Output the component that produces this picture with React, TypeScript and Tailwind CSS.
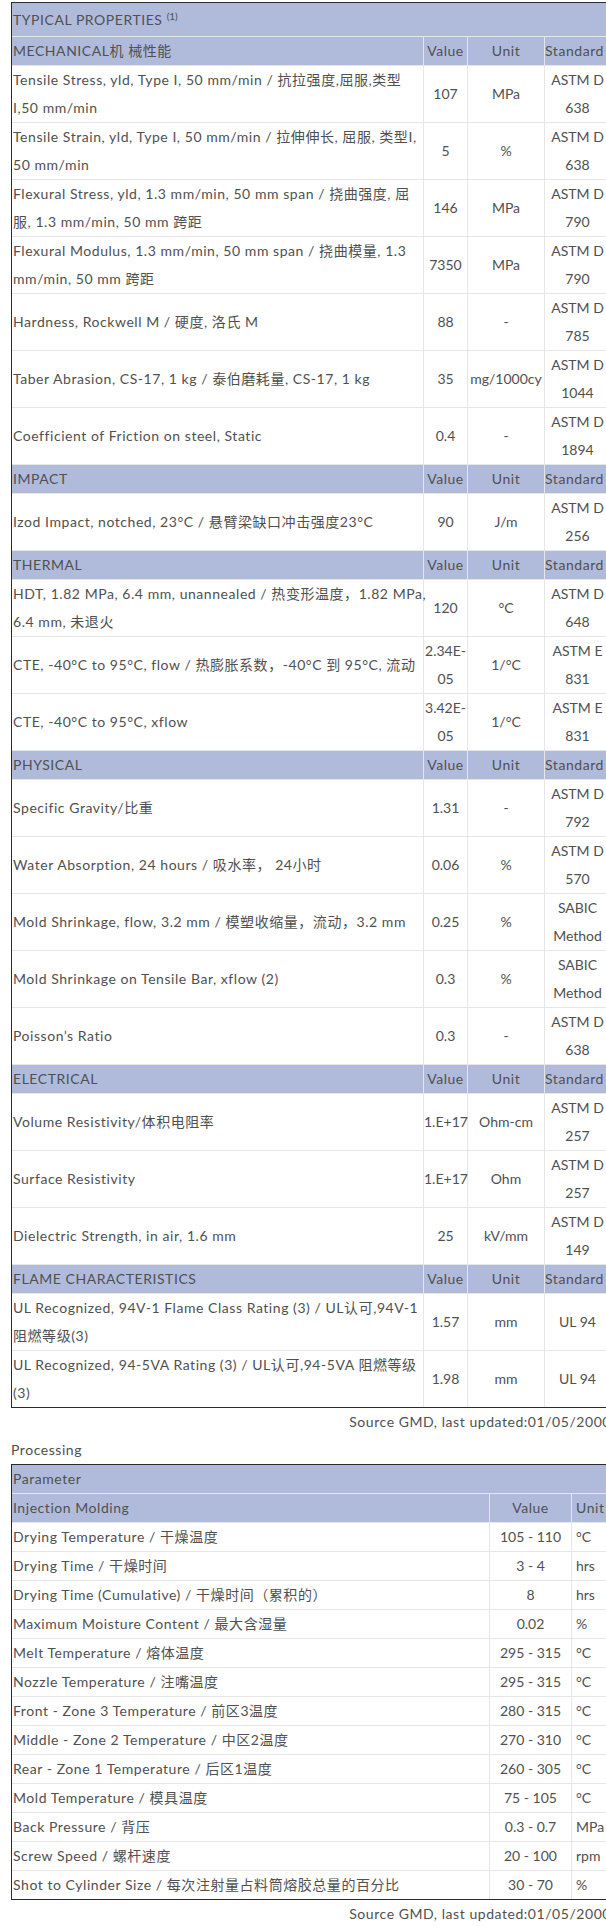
import React from 'react';

type Row = { name: string[]; value: string; unit: string; std: string };
type Section = { title: string; rows: Row[] };

const sections: Section[] = [
  {
    title: 'MECHANICAL机 械性能',
    rows: [
      { name: ['Tensile Stress, yld, Type I, 50 mm/min / 抗拉强度,屈服,类型', 'I,50 mm/min'], value: '107', unit: 'MPa', std: 'ASTM D 638' },
      { name: ['Tensile Strain, yld, Type I, 50 mm/min / 拉伸伸长, 屈服, 类型I,', '50 mm/min'], value: '5', unit: '%', std: 'ASTM D 638' },
      { name: ['Flexural Stress, yld, 1.3 mm/min, 50 mm span / 挠曲强度, 屈', '服, 1.3 mm/min, 50 mm 跨距'], value: '146', unit: 'MPa', std: 'ASTM D 790' },
      { name: ['Flexural Modulus, 1.3 mm/min, 50 mm span / 挠曲模量, 1.3', 'mm/min, 50 mm 跨距'], value: '7350', unit: 'MPa', std: 'ASTM D 790' },
      { name: ['Hardness, Rockwell M / 硬度, 洛氏 M'], value: '88', unit: '-', std: 'ASTM D 785' },
      { name: ['Taber Abrasion, CS-17, 1 kg / 泰伯磨耗量, CS-17, 1 kg'], value: '35', unit: 'mg/1000cy', std: 'ASTM D 1044' },
      { name: ['Coefficient of Friction on steel, Static'], value: '0.4', unit: '-', std: 'ASTM D 1894' },
    ],
  },
  {
    title: 'IMPACT',
    rows: [
      { name: ['Izod Impact, notched, 23°C / 悬臂梁缺口冲击强度23°C'], value: '90', unit: 'J/m', std: 'ASTM D 256' },
    ],
  },
  {
    title: 'THERMAL',
    rows: [
      { name: ['HDT, 1.82 MPa, 6.4 mm, unannealed / 热变形温度，1.82 MPa,', '6.4 mm, 未退火'], value: '120', unit: '°C', std: 'ASTM D 648' },
      { name: ['CTE, -40°C to 95°C, flow / 热膨胀系数，-40°C 到 95°C, 流动'], value: '2.34E-05', unit: '1/°C', std: 'ASTM E 831' },
      { name: ['CTE, -40°C to 95°C, xflow'], value: '3.42E-05', unit: '1/°C', std: 'ASTM E 831' },
    ],
  },
  {
    title: 'PHYSICAL',
    rows: [
      { name: ['Specific Gravity/比重'], value: '1.31', unit: '-', std: 'ASTM D 792' },
      { name: ['Water Absorption, 24 hours / 吸水率， 24小时'], value: '0.06', unit: '%', std: 'ASTM D 570' },
      { name: ['Mold Shrinkage, flow, 3.2 mm / 模塑收缩量，流动，3.2 mm'], value: '0.25', unit: '%', std: 'SABIC Method' },
      { name: ['Mold Shrinkage on Tensile Bar, xflow (2)'], value: '0.3', unit: '%', std: 'SABIC Method' },
      { name: ['Poisson’s Ratio'], value: '0.3', unit: '-', std: 'ASTM D 638' },
    ],
  },
  {
    title: 'ELECTRICAL',
    rows: [
      { name: ['Volume Resistivity/体积电阻率'], value: '1.E+17', unit: 'Ohm-cm', std: 'ASTM D 257' },
      { name: ['Surface Resistivity'], value: '1.E+17', unit: 'Ohm', std: 'ASTM D 257' },
      { name: ['Dielectric Strength, in air, 1.6 mm'], value: '25', unit: 'kV/mm', std: 'ASTM D 149' },
    ],
  },
  {
    title: 'FLAME CHARACTERISTICS',
    rows: [
      { name: ['UL Recognized, 94V-1 Flame Class Rating (3) / UL认可,94V-1', '阻燃等级(3)'], value: '1.57', unit: 'mm', std: 'UL 94' },
      { name: ['UL Recognized, 94-5VA Rating (3) / UL认可,94-5VA 阻燃等级', '(3)'], value: '1.98', unit: 'mm', std: 'UL 94' },
    ],
  },
];

const processing = [
  ['Drying Temperature / 干燥温度', '105 - 110', '°C'],
  ['Drying Time / 干燥时间', '3 - 4', 'hrs'],
  ['Drying Time (Cumulative) / 干燥时间（累积的）', '8', 'hrs'],
  ['Maximum Moisture Content / 最大含湿量', '0.02', '%'],
  ['Melt Temperature / 熔体温度', '295 - 315', '°C'],
  ['Nozzle Temperature / 注嘴温度', '295 - 315', '°C'],
  ['Front - Zone 3 Temperature / 前区3温度', '280 - 315', '°C'],
  ['Middle - Zone 2 Temperature / 中区2温度', '270 - 310', '°C'],
  ['Rear - Zone 1 Temperature / 后区1温度', '260 - 305', '°C'],
  ['Mold Temperature / 模具温度', '75 - 105', '°C'],
  ['Back Pressure / 背压', '0.3 - 0.7', 'MPa'],
  ['Screw Speed / 螺杆速度', '20 - 100', 'rpm'],
  ['Shot to Cylinder Size / 每次注射量占料筒熔胶总量的百分比', '30 - 70', '%'],
];

// cells draw top + left lines; the first row / first column skip them so the dark table edge shows
const cell = 'border-t border-l border-[#e6e6e6] p-0 align-middle';
const head = 'bg-[#b0bbdc]';
const wide = 'tracking-[0.55px]';

export default function App() {
  return (
    <div
      className="w-[612px] bg-white pt-[2px] pl-[11px] text-[14px] leading-[28px] text-[#505050]"
      style={{ fontFamily: 'Lato, "Noto Sans CJK SC", sans-serif' }}
    >
      <table className="w-[600px] table-fixed border-separate border-spacing-0 border border-[#2b2b2b]">
        <colgroup>
          <col className="w-[411px]" />
          <col className="w-[44px]" />
          <col className="w-[77px]" />
          <col />
        </colgroup>
        <tbody>
          <tr>
            <td colSpan={4} className={`${head} ${wide} h-[33px] p-0 pl-px align-middle`}>
              TYPICAL PROPERTIES <sup className="text-[10px] tracking-normal">(1)</sup>
            </td>
          </tr>
          {sections.map((s) => (
            <React.Fragment key={s.title}>
              <tr className={head}>
                <td className={`${cell} ${wide} border-l-0 pl-px`}>{s.title}</td>
                <td className={`${cell} ${wide} text-center`}>Value</td>
                <td className={`${cell} ${wide} text-center`}>Unit</td>
                <td className={`${cell} ${wide} whitespace-nowrap`}>Standard</td>
              </tr>
              {s.rows.map((r) => (
                <tr key={r.name[0]}>
                  <td className={`${cell} ${wide} border-l-0 pl-px`}>
                    {r.name.map((l, i) => (
                      <div key={i} className="whitespace-nowrap">{l}</div>
                    ))}
                  </td>
                  <td className={`${cell} text-center`}>{r.value}</td>
                  <td className={`${cell} text-center`}>{r.unit}</td>
                  <td className={`${cell} px-1 text-center`}>{r.std}</td>
                </tr>
              ))}
            </React.Fragment>
          ))}
        </tbody>
      </table>
      <p className={`${wide} w-[600px] text-right whitespace-nowrap`}>Source GMD, last updated:01/05/2000</p>
      <p className={wide}>Processing</p>

      <table className="w-[600px] table-fixed border-separate border-spacing-0 border border-[#2b2b2b]">
        <colgroup>
          <col className="w-[477px]" />
          <col className="w-[82px]" />
          <col />
        </colgroup>
        <tbody>
          <tr>
            <td colSpan={3} className={`${head} ${wide} p-0 pl-px align-middle`}>Parameter</td>
          </tr>
          <tr className={head}>
            <td className={`${cell} ${wide} border-l-0 pl-px`}>Injection Molding</td>
            <td className={`${cell} ${wide} text-center`}>Value</td>
            <td className={`${cell} ${wide} pl-[4px]`}>Unit</td>
          </tr>
          {processing.map(([name, value, unit]) => (
            <tr key={name}>
              <td className={`${cell} ${wide} border-l-0 pl-px whitespace-nowrap`}>{name}</td>
              <td className={`${cell} text-center`}>{value}</td>
              <td className={`${cell} pl-[4px] whitespace-nowrap`}>{unit}</td>
            </tr>
          ))}
        </tbody>
      </table>
      <p className={`${wide} w-[600px] text-right whitespace-nowrap`}>Source GMD, last updated:01/05/2000</p>
    </div>
  );
}
